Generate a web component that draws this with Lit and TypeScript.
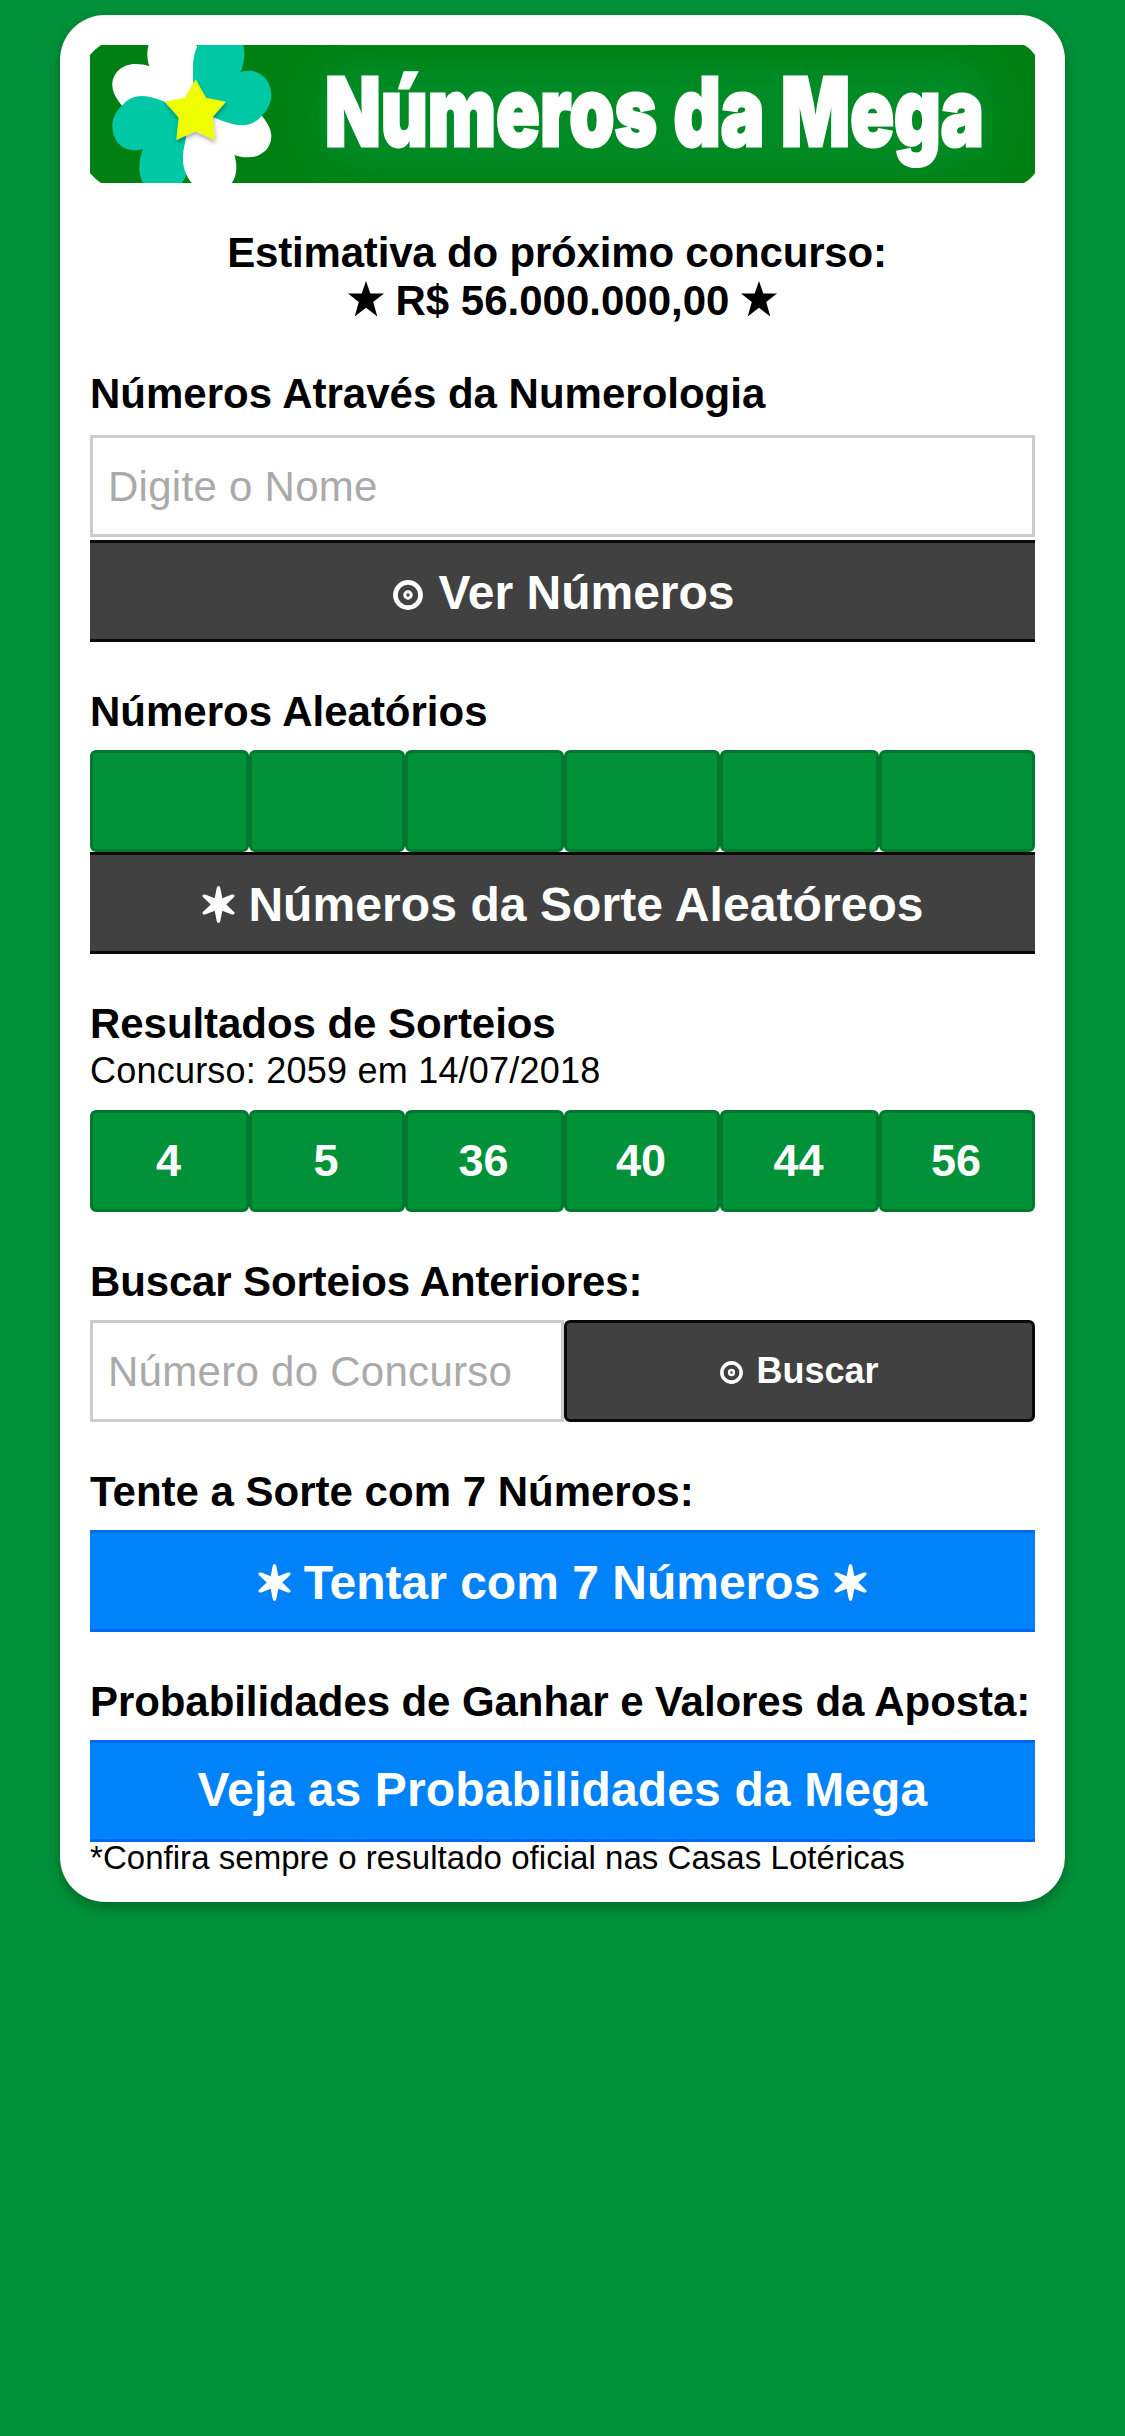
import { LitElement, html, css, svg } from "lit";
import { customElement, property } from "lit/decorators.js";

const ringIcon = html`<svg class="icon ring" viewBox="0 0 31 31" aria-hidden="true">
  <circle cx="15.5" cy="15.5" r="13" fill="none" stroke="#fff" stroke-width="4.8" />
  <circle cx="15.5" cy="15.5" r="3.3" fill="none" stroke="#fff" stroke-width="3.2" />
</svg>`;

const sparkIcon = html`<svg class="icon spark" viewBox="0 0 33 37" aria-hidden="true">
  <path
    fill="#fff"
    d="M16.5 0 Q18 0 18.3 2 L20.3 12.2 L29.8 8.6 Q32.4 8.2 32.6 9.8 Q32.6 10.8 31.6 11.6 L24.3 18.5 L31.6 25.4 Q32.6 26.2 32.6 27.2 Q32.4 28.8 29.8 28.4 L20.3 24.8 L18.3 35 Q18 37 16.5 37 Q15 37 14.7 35 L12.7 24.8 L3.2 28.4 Q.6 28.8 .4 27.2 Q.4 26.2 1.4 25.4 L8.7 18.5 L1.4 11.6 Q.4 10.8 .4 9.8 Q.6 8.2 3.2 8.6 L12.7 12.2 L14.7 2 Q15 0 16.5 0Z"
  />
</svg>`;

const starIcon = html`<svg class="icon star" viewBox="0 0 36 36" aria-hidden="true">
  <path
    fill="#000"
    d="M18 0 L22.3 12.6 L36 12.6 L25.2 20.9 L29.3 35.6 L18 26.8 L6.7 35.6 L10.8 20.9 L0 12.6 L13.7 12.6Z"
  />
</svg>`;

const tealPetal = svg`<path fill="#00c8a5" d="M432 335 C430 290 429 240 429 205 C429 180 432 160 440 145 C452 105 490 80 525 82 C562 86 583 122 583 160 C583 182 579 200 572 216 C583 213 594 212 605 213 C640 217 664 247 664 285 C664 310 650 334 634 348 C618 368 598 376 575 376 C548 376 515 362 490 352 Z"/>`;
const whitePetal = svg`<path fill="#fff" d="M430 335 L217 318 C198 295 187 275 187 255 C187 218 218 192 255 192 C272 192 286 194 298 199 C293 185 292 172 292 160 C292 115 325 85 365 85 C400 87 428 110 441 139 C455 165 455 200 446 234 L430 335Z"/>`;

/** Words of the banner title: text, left edge and drawn width. */
const titleWords: [string, number, number][] = [
  ["Números", 235, 332],
  ["da", 583.5, 91],
  ["Mega", 691, 203],
];

@customElement("mega-banner")
export class MegaBanner extends LitElement {
  static styles = css`
    :host {
      display: block;
      height: 138px;
    }
    svg {
      display: block;
      width: 945px;
      height: 138px;
    }
    .title {
      font-family: Inter, "Liberation Sans", sans-serif;
      font-weight: 900;
      font-size: 95px;
      fill: #fff;
      stroke: #fff;
      stroke-width: 3px;
    }
  `;

  /** Condenses each word to its drawn width. */
  firstUpdated() {
    this.renderRoot.querySelectorAll<SVGTextElement>(".title").forEach((el, i) => {
      const [, x, width] = titleWords[i];
      const ratio = width / el.getComputedTextLength();
      el.setAttribute("transform", `translate(${x} 101) scale(${ratio} 1)`);
    });
  }

  render() {
    return html`<svg viewBox="0 0 945 138" role="img">
      <defs>
        <clipPath id="shape">
          <path d="M11 0 H934 Q939 2 945 10 V128 Q941 134 934 138 H11 Q5 134 0 128 V10 Q5 4 11 0Z" />
        </clipPath>
        <filter id="glow" x="-20%" y="-80%" width="140%" height="260%">
          <feGaussianBlur stdDeviation="19" />
        </filter>
        <filter id="soft" x="-30%" y="-30%" width="160%" height="160%">
          <feDropShadow dx="2" dy="8" stdDeviation="7" flood-opacity=".35" />
        </filter>
      </defs>
      <g clip-path="url(#shape)">
        <rect width="945" height="138" fill="#008012" />
        <rect x="226" y="14" width="678" height="110" rx="40" fill="#008b27" filter="url(#glow)" />
        <g transform="translate(-40 -45) scale(.33333)">
          ${whitePetal}
          <g transform="rotate(180 425.5 332)">${tealPetal}</g>
          <g transform="rotate(180 425.5 332)">${whitePetal}</g>
          ${tealPetal}
          <path
            filter="url(#soft)"
            fill="#f0ff00"
            d="M437 238 L468 293 L528 305 L488 351 L495 421 L437 394 L379 420 L386 353 L344 305 L405 293Z"
          />
        </g>
        ${titleWords.map(([word]) => svg`<text class="title">${word}</text>`)}
      </g>
    </svg>`;
  }
}

@customElement("number-row")
export class NumberRow extends LitElement {
  @property({ attribute: false }) values: string[] = [];
  static styles = css`
    :host {
      display: grid;
      grid-template-columns: 159px 156px 159px 156px 159px 156px;
      height: 102px;
    }
    .cell {
      box-sizing: border-box;
      padding-right: 2px;
      border: 3px solid #00782e;
      border-radius: 6px;
      background: #009139;
      color: #fff;
      font: bold 45px/96px "Liberation Sans", Arial, sans-serif;
      text-align: center;
    }
  `;
  render() {
    return this.values.map((v) => html`<div class="cell">${v}</div>`);
  }
}

@customElement("app-root")
export class AppRoot extends LitElement {
  static styles = css`
    :host {
      display: block;
      box-sizing: border-box;
      min-height: 2436px;
      padding: 15px 60px;
      background: #009139;
      color: #000;
      font-family: "Liberation Sans", Arial, sans-serif;
    }
    .card {
      padding: 30px;
      border-radius: 45px;
      background: #fff;
      box-shadow: 0 5px 13px rgba(0, 0, 0, 0.28);
    }
    .estimate {
      box-sizing: border-box;
      height: 96px;
      margin: 45px 0 0;
      padding-top: 1px;
      font: bold 42px/48px "Liberation Sans", Arial, sans-serif;
      text-align: center;
    }
    .first {
      padding-right: 11px;
      letter-spacing: -0.18px;
    }
    .prize {
      display: flex;
      justify-content: center;
      gap: 12px;
    }
    h2 {
      margin: 45px 0 15px;
      padding-top: 2px;
      font: bold 42px/46px "Liberation Sans", Arial, sans-serif;
      white-space: nowrap;
    }
    .name-title {
      margin-bottom: 18px;
    }
    .result-title {
      margin-bottom: 0;
      letter-spacing: -0.05px;
    }
    .search-title {
      letter-spacing: -0.15px;
    }
    .odds-title {
      letter-spacing: -0.08px;
    }
    .draw {
      margin: 0 0 15px;
      font-size: 36px;
      line-height: 48px;
      letter-spacing: 0.22px;
    }
    input,
    button {
      display: block;
      box-sizing: border-box;
      width: 100%;
      height: 102px;
      margin: 0;
      font-family: inherit;
    }
    input {
      padding: 1px 15px 0;
      border: 3px solid #ccc;
      border-radius: 0;
      outline: none;
      background: #fff;
      font-size: 42px;
      letter-spacing: 0.28px;
    }
    input::placeholder {
      color: #aaa;
      opacity: 1;
    }
    button {
      display: flex;
      align-items: center;
      justify-content: center;
      padding: 3px 0 0;
      border: solid #0a0a0a;
      border-width: 3px 0;
      border-radius: 0;
      background: #414141;
      color: #fff;
      font-size: 48px;
      font-weight: bold;
      white-space: nowrap;
    }
    .spaced {
      margin-top: 3px;
      padding-left: 3px;
    }
    .random {
      padding-left: 1px;
      letter-spacing: 0.08px;
    }
    .blue {
      border-color: #0068f2;
      background: #0082fa;
    }
    .odds {
      padding: 0 0 3px;
      letter-spacing: 0.14px;
    }
    .search {
      display: grid;
      grid-template-columns: 474px 471px;
    }
    .small {
      border-width: 3px;
      border-radius: 6px;
      padding: 0;
      font-size: 36px;
    }
    .icon {
      flex: none;
      display: block;
    }
    .star {
      width: 36px;
      height: 36px;
      margin-top: 4px;
    }
    .ring {
      width: 30px;
      height: 30px;
      margin: 4px 15px 0 0;
    }
    .small .ring {
      width: 23px;
      height: 23px;
      margin: 2px 13px 0 0;
    }
    .spark {
      width: 33px;
      height: 37px;
      margin-right: 13px;
    }
    .spark:last-child {
      margin: 0 0 0 14px;
    }
    .note {
      margin: 0;
      padding-top: 1px;
      font-size: 33px;
      line-height: 29px;
      letter-spacing: 0.04px;
      white-space: nowrap;
    }
  `;

  render() {
    return html`<main class="card">
      <mega-banner></mega-banner>
      <div class="estimate">
        <div class="first">Estimativa do próximo concurso:</div>
        <div class="prize">${starIcon}<span>R$ 56.000.000,00</span>${starIcon}</div>
      </div>

      <h2 class="name-title">Números Através da Numerologia</h2>
      <input type="text" placeholder="Digite o Nome" />
      <button class="spaced">${ringIcon}<span>Ver Números</span></button>

      <h2>Números Aleatórios</h2>
      <number-row .values=${["", "", "", "", "", ""]}></number-row>
      <button class="random">${sparkIcon}<span>Números da Sorte Aleatóreos</span></button>

      <h2 class="result-title">Resultados de Sorteios</h2>
      <p class="draw">Concurso: 2059 em 14/07/2018</p>
      <number-row .values=${["4", "5", "36", "40", "44", "56"]}></number-row>

      <h2 class="search-title">Buscar Sorteios Anteriores:</h2>
      <div class="search">
        <input type="text" placeholder="Número do Concurso" />
        <button class="small">${ringIcon}<span>Buscar</span></button>
      </div>

      <h2>Tente a Sorte com 7 Números:</h2>
      <button class="blue">${sparkIcon}<span>Tentar com 7 Números</span>${sparkIcon}</button>

      <h2 class="odds-title">Probabilidades de Ganhar e Valores da Aposta:</h2>
      <button class="blue odds">Veja as Probabilidades da Mega</button>
      <p class="note">*Confira sempre o resultado oficial nas Casas Lotéricas</p>
    </main>`;
  }
}
